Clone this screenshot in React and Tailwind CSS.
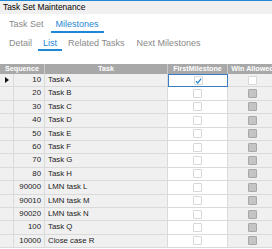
import React from "react";

const rows = [
  ["10", "Task A"],
  ["20", "Task B"],
  ["30", "Task C"],
  ["40", "Task D"],
  ["50", "Task E"],
  ["60", "Task F"],
  ["70", "Task G"],
  ["80", "Task H"],
  ["90000", "LMN task L"],
  ["90010", "LMN task M"],
  ["90020", "LMN task N"],
  ["100", "Task Q"],
  ["10000", "Close case R"],
];

function Check() {
  return (
    <svg width="8" height="8" viewBox="0 0 8 8">
      <path d="M1.2 4.2 L3.2 6.2 L7 1.2" fill="none" stroke="#2a8ad8" strokeWidth="1.5" />
    </svg>
  );
}

export default function App() {
  return (
    <div className="w-[272px] h-[249px] overflow-hidden bg-white" style={{ fontFamily: '"Liberation Sans", Arial, sans-serif' }}>
      <div className="h-[14px] border-t border-[#1e88d6] bg-[#f0f0f0] pl-[3px] text-[8.4px] leading-[13px] text-black font-medium">
        Task Set Maintenance
      </div>

      <div className="flex gap-[2px] pl-[4px] mt-[4px] text-[9px] leading-[13px]">
        <div className="px-[5px] text-[#8a8a8a] border-b-2 border-transparent">Task Set</div>
        <div className="px-[5px] text-[#1e88d6] border-b-2 border-[#1e88d6]">Milestones</div>
      </div>

      <div className="flex gap-[1px] pl-[4px] mt-[4px] text-[9px] leading-[12px]">
        <div className="px-[5px] text-[#8a8a8a] border-b-2 border-transparent">Detail</div>
        <div className="px-[5px] text-[#1e88d6] border-b-2 border-[#1e88d6]">List</div>
        <div className="px-[5px] text-[#8a8a8a] border-b-2 border-transparent">Related Tasks</div>
        <div className="px-[5px] ml-[1px] text-[#8a8a8a] border-b-2 border-transparent">Next Milestones</div>
      </div>

      <div className="mt-[13px] w-[277px]">
        <div className="flex h-[10px] bg-[#a8a8a8] text-white font-bold text-[7.2px] leading-[10px]">
          <div className="w-[45px] text-center border-r border-[#cacaca]">Sequence</div>
          <div className="w-[123px] text-center border-r border-[#cacaca]">Task</div>
          <div className="w-[60px] text-center border-r border-[#cacaca]">FirstMilestone</div>
          <div className="w-[49px] text-center whitespace-nowrap">Win Allowed</div>
        </div>

        {rows.map(([seq, task], i) => (
          <div key={seq + task} className="flex h-[13.4px] text-[7.8px] leading-[12px] text-[#222]">
            <div className="w-[14px] bg-[#f0f0f0] border-b border-r border-[#dadada] flex items-center pl-[5px]">
              {i === 0 && (
                <svg width="4" height="6" viewBox="0 0 4 6">
                  <path d="M0 0 L4 3 L0 6 Z" fill="#111" />
                </svg>
              )}
            </div>
            <div className="w-[31px] bg-[#f0f0f0] border-b border-r border-[#dadada] text-right pr-[3px]">{seq}</div>
            <div className="w-[123px] bg-[#f0f0f0] border-b border-r border-[#dadada] pl-[3px]">{task}</div>
            <div
              className={
                i === 0
                  ? "w-[60px] bg-white border border-[#3b7dc4] flex items-center justify-center"
                  : "w-[60px] bg-white border-b border-r border-[#dadada] flex items-center justify-center"
              }
            >
              <div className="w-[9px] h-[9px] border border-[#d8d8d8] rounded-[1px] bg-white flex items-center justify-center">
                {i === 0 && <Check />}
              </div>
            </div>
            <div className="w-[49px] bg-[#f0f0f0] border-b border-[#dadada] flex items-center justify-center">
              <div
                className={
                  i === 0
                    ? "w-[9px] h-[9px] border border-[#d8d8d8] rounded-[1px] bg-white"
                    : "w-[9px] h-[9px] border border-[#a8a8a8] rounded-[1px] bg-[#c4c4c4]"
                }
              />
            </div>
          </div>
        ))}
      </div>
    </div>
  );
}
